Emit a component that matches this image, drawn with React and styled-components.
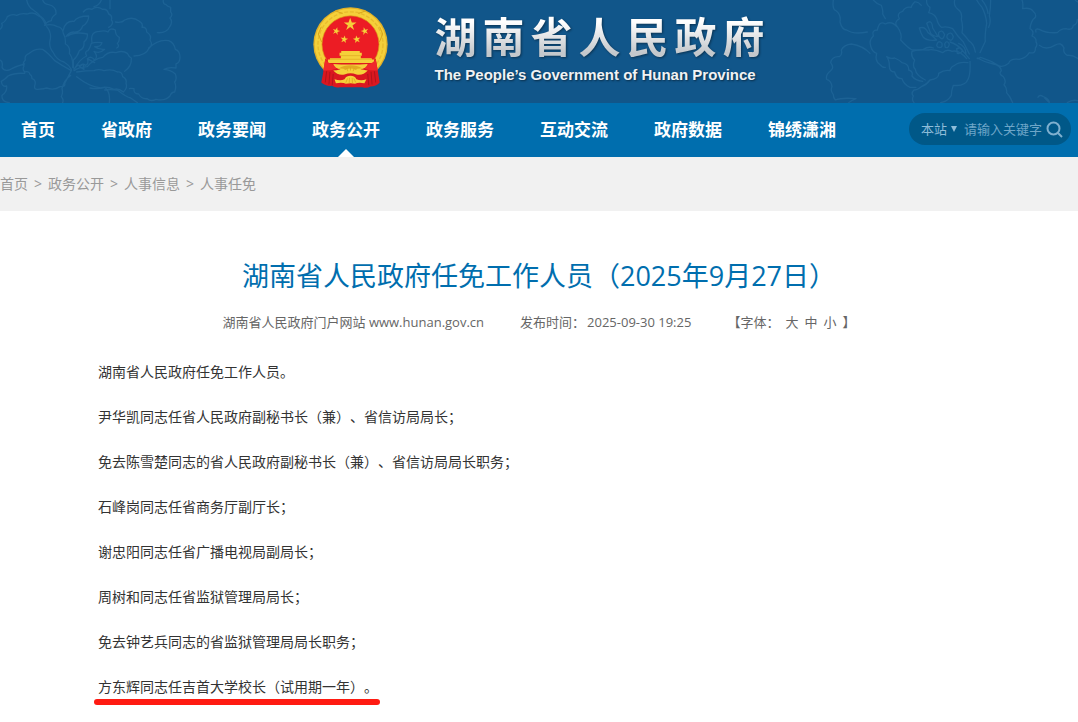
import { useState } from 'react';
import styled, { createGlobalStyle } from 'styled-components';

const colors = {
  banner: '#11568a',
  bannerLine: '#1c6295',
  nav: '#006eae',
  search: '#005888',
  searchText: '#8fbdd9',
  crumbs: '#f1f1f1',
  title: '#006eae',
  gold: '#f5d03a',
  red: '#ec1c24',
};

const GlobalStyle = createGlobalStyle`
  body {
    margin: 0;
    background: #fff;
    color: #333;
    font-family: 'Open Sans', 'Noto Sans CJK SC', sans-serif;
    font-size: 14px;
    text-spacing-trim: space-all;
  }

  a {
    color: inherit;
    text-decoration: none;
  }
`;

// Banner
const Banner = styled.header`
  position: relative;
  display: flex;
  justify-content: center;
  align-items: flex-start;
  gap: 46px;
  padding: 6px 0 15px;
  overflow: hidden;
  background: ${colors.banner};
`;

const Flowers = styled.svg`
  position: absolute;
  top: 0;
  ${props => (props.$side === 'left' ? 'left: 0;' : 'right: 0;')}
  fill: none;
  stroke: ${colors.bannerLine};
  stroke-width: 4;
  stroke-linecap: round;
  stroke-linejoin: round;
`;

const EmblemIcon = styled.svg`
  display: block;
  flex-shrink: 0;
`;

const SiteTitle = styled.div`
  position: relative;
  padding-top: 7px;
`;

const SiteName = styled.h1`
  margin: 0 -6px 8px 0;
  font-family: 'Noto Sans CJK SC', sans-serif;
  font-size: 42px;
  font-weight: 700;
  line-height: 44px;
  letter-spacing: 6px;
  white-space: nowrap;
  color: transparent;
  background: linear-gradient(#fff 20%, #c4c8cc 90%);
  background-clip: text;
  filter: drop-shadow(1px 1px 1px rgba(0, 0, 0, 0.4));
`;

const SiteNameEn = styled.p`
  margin: 0;
  font-family: 'Liberation Sans', sans-serif;
  font-size: 15px;
  font-weight: 700;
  line-height: 20px;
  white-space: nowrap;
  color: #f0f2f4;
  text-shadow: 1px 1px 2px rgba(0, 0, 0, 0.5);
`;

// Navigation
const NavBar = styled.nav`
  display: flex;
  justify-content: space-between;
  align-items: center;
  padding: 0 7px 0 21px;
  background: ${colors.nav};
`;

const NavList = styled.ul`
  display: flex;
  gap: 46px;
  margin: 0;
  padding: 0;
  list-style: none;
`;

const NavLink = styled.a`
  position: relative;
  display: block;
  color: #fff;
  font-size: 17px;
  font-weight: 700;
  line-height: 54px;
  white-space: nowrap;

  &[aria-current]::after {
    content: '';
    position: absolute;
    bottom: 0;
    left: 50%;
    margin-left: -8px;
    border: 8px solid transparent;
    border-top-width: 0;
    border-bottom-color: #fff;
  }
`;

const SearchForm = styled.form`
  display: flex;
  align-items: center;
  box-sizing: border-box;
  width: 162px;
  height: 32px;
  margin-bottom: 2px;
  padding: 0 8px 0 12px;
  border-radius: 16px;
  background: ${colors.search};
  color: ${colors.searchText};
`;

const ScopeField = styled.div`
  display: flex;
  align-items: center;
  gap: 3px;
  margin-right: 7px;
`;

const ScopeSelect = styled.select`
  appearance: none;
  width: 27px;
  padding: 0;
  border: 0;
  background: transparent;
  color: inherit;
  font: inherit;
  font-size: 13px;
`;

const SearchInput = styled.input`
  flex: 1;
  min-width: 0;
  padding: 0;
  border: 0;
  outline: 0;
  background: transparent;
  color: inherit;
  font: inherit;
  font-size: 13px;

  &::placeholder {
    color: #6ea6c8;
    opacity: 1;
  }
`;

const SearchButton = styled.button`
  display: flex;
  margin-left: 4px;
  padding: 0;
  border: 0;
  background: transparent;
  color: #7fb0cf;
  cursor: pointer;
`;

// Breadcrumbs
const Crumbs = styled.nav`
  display: flex;
  gap: 6px;
  background: ${colors.crumbs};
  color: #999;
  line-height: 54px;
`;

// Article
const Article = styled.article`
  padding: 45px 98px 0;
`;

const ArticleTitle = styled.h2`
  margin: 0;
  color: ${colors.title};
  font-size: 27px;
  font-weight: 400;
  line-height: 40px;
  text-align: center;
`;

const Meta = styled.div`
  display: flex;
  justify-content: center;
  gap: 36px;
  margin-top: 16px;
  color: #666;
  font-size: 13px;
  line-height: 20px;
  white-space: nowrap;
`;

const PublishTime = styled.time`
  margin-left: 2px;
`;

const FontSizes = styled.div`
  display: flex;
  gap: 6px;
`;

const FontSizeButton = styled.button`
  padding: 0;
  border: 0;
  background: transparent;
  color: inherit;
  font: inherit;
  cursor: pointer;
`;

const ArticleBody = styled.div`
  padding-top: 17px;
  font-size: ${props => props.$size}px;
  line-height: 45px;

  p {
    margin: 0;
  }
`;

const Marked = styled.span`
  position: relative;

  &::after {
    content: '';
    position: absolute;
    left: -4px;
    right: -2px;
    bottom: -9px;
    height: 6px;
    border-radius: 3px;
    background: #ff1b12;
  }
`;

const navItems = ['首页', '省政府', '政务要闻', '政务公开', '政务服务', '互动交流', '政府数据', '锦绣潇湘'];

const crumbs = ['首页', '政务公开', '人事信息', '人事任免'];

const fontSizes = [
  { label: '大', size: 18 },
  { label: '中', size: 16 },
  { label: '小', size: 14 },
];

const paragraphs = [
  { text: '湖南省人民政府任免工作人员。' },
  { text: '尹华凯同志任省人民政府副秘书长（兼）、省信访局局长；' },
  { text: '免去陈雪楚同志的省人民政府副秘书长（兼）、省信访局局长职务；' },
  { text: '石峰岗同志任省商务厅副厅长；' },
  { text: '谢忠阳同志任省广播电视局副局长；' },
  { text: '周树和同志任省监狱管理局局长；' },
  { text: '免去钟艺兵同志的省监狱管理局局长职务；' },
  { text: '方东辉同志任吉首大学校长（试用期一年）。', marked: true },
];

const LeftFlowers = () => (
  <Flowers $side="left" width="182" height="103" viewBox="0 0 546 309" aria-hidden="true">
    <path d="M0 88q10-8 5-18q12-4 17-20q14-10 28-4q14-8 32-4q20-8 34 6q16 4 22 24" />
    <path d="M80 0q4 20 20 30q26 18 36 44M128 0q4 12 18 14q24 6 22 28q-14 10-14 20q-16 4-20 14q22-6 38 4q16 2 18 20q8 14 6 32q16 8 12 28q12 14 10 42M140 80q16 18 10 42q-4 20 10 36q10 22 32 28q14 8 22 22" />
    <path d="M190 90q6-28 32-26q10-16 44-16q0 20-18 30q-6 20-28 18q-14 2-22 14M204 108q20-14 58-6q2 14-10 24q2 20-14 26q-6 18-18 28v24" />
    <path d="M250 36q10-14 26-8q14-12 32 0q14-2 18 14q12 4 8 18q8 8-2 18l-6 4M282 20q16-4 22-20M330 0v26" />
    <path d="M276 128q-6-34 22-34q16-4 26 2q6-14 22-6q0 16 12 22q0 14-6 18q8 10-2 14M346 66q20 4 28-6q24-12 44 4q12 6 8 18q14-2 14 14q16 10 10 24q10 16-4 26q-8 20-44 22M446 144q30-28 60-22q16 6 20 26q14 4 14 24q0 16-12 20v12q-22-4-36 4q22 2 34 14q6 14-2 24q6 14 0 30q-10 0-14 12q-14 16-42 10q-16 8-26-2q-18 2-26-14q-16 0-14-16q-14-2-14 0" />
    <path d="M222 212q14-10 40-12q20-24 46-28q18-20 40-14q20-8 34 2q4 10 12 14q2 24-20 40M230 216q28-4 52-4q14-6 30 0q24-6 40 4q14-2 16 14q14 8 10 20q6 12-8 26q-14-12-28-8q-22-10-40-4q-34-4-72-34" />
    <path d="M214 212q-26-14-50-30q-20-24-36-34q-22-4-40 12q-16 6-12 20q-10 10-4 18q-6 10 2 18q14-4 16 8q6 2 6 12q14 4 8 22q-2 12 10 10q20-2 26-4q22 8 40-4q18 0 14-10l20-38M0 180q10 4 6 22q4 12 22 8q16-10 46-18M28 308q-24-2-22-22q16-10 14-28q-14 4-16-14q14-8 20-16q20-10 50-8M212 226q-20 14-26 40q4 12-2 24q8 10 4 18M270 264q22 4 44-2q18 14 14 46M314 270q16-2 38 0q28 22 40 24l20 14" />
    <path d="M222 208q18-32 38-40q-8-14 4-16q6-8 10-22q10-4 32-2q-4 14-22 12q14 10 30 8q-14 14-32 6q14 16 2 26q-10-14-22-4q6 16-6 20q-8-8-16 2q-6-8-16 8M238 200l12-8l2 16zM262 176q10 6 22 12" />
    <path d="M490 0q-2 12 8 14q4 6 14 8v14q8 8-2 18q10 12-2 28q-8 18-36 16" />
  </Flowers>
);

const RightFlowers = () => (
  <Flowers $side="right" width="268" height="103" viewBox="0 0 804 309" aria-hidden="true">
    <path d="M70 0q-4 28 8 32q16 12 12 34q6 24 20 24q20 14 62 6M190 0q10 12 24 16q6 16 4 26l8 14" />
    <path d="M334 16q-10-12-20-10q-10 10-10 16q-18-4-26 12q-20 6-10 22q-18 12-6 24q16 24 10 40q20 22 34 30q22 0 34-2q16-10 30-4M260 80q-14-18-34-8q-18-12-24 18q-18 0-12 18q-14 14-8 30q4 18 18 22q-6 22 8 32q10 12 18 10" />
    <path d="M350 0q-2 14 10 22q0 10-4 16q18 4 24 18q4 18 14 26q18-4 34 4q12 20 32 40l18 36M434 0q-4 18 10 28q14 10 10 30q6 20 2 40q14 14 20 24q16 10 20 34M500 0q8 14 16 22q12 22 14 48q-6 36-4 54l-16 34M516 0q16 20 18 40M542 0q0 26-4 48q6 16-2 34" />
    <path d="M636 0q4 8 2 26q22-4 30 6q12 10 8 20q-14 10-16 34q14 8 6 22q14 6 12 18q6 8-2 18q2 18-18 14q-10 16-30 20q-28-4-32 12q-14 12-28 8q-24-16-56-26q-12 6-10 2q20 12 48 18q22 4 24 20q-10 10 6 18q10 14 2 24q10 10 8 24q10 10 18 30" />
    <path d="M180 160q-20-22-56-28q-22 2-30 18q4 14-6 20q-22-2-26 18q12 16 0 24q-16 12-12 26q14 4 16 22q-6 12 4 24q0 10 6 16q20-8 62-4q-14 6-22 12" />
    <path d="M470 176q-24-28-44-22q-16-8-28 4q-26-12-44-8q-30-2-48 4q-4 16 8 26q-8 20 2 28q2 18 30 32M474 188q-26-4-40 8q-12 4-14 16q-16-4-34 8q2 16-26 20q-10 14-26 20q-12 10-22 10q-10 10-2 18q-6 12 2 20M480 184q2 40-6 54q-8 22-44 18q-6 16-6 30q-10 18-32 22M230 170q8 10 8 28q0 18 16 18q4 20 22 20q6 18 24 26h18M230 170q12 8 24 4q14 6 22 14q22 4 20 22q14 4 10 18q10 14 32 16" />
    <path d="M328 84q18-6 26 14q12 8 26 22q-28 4-40-8q-8-12-12-28M350 70q16-14 18 14q8 12 16 26q-16-2-22-10zM386 98q10-12 18 6q-4 14-10 12q-10-6-8-18M412 104q12-12 18 6q-4 16-14 8q-8-4-4-14M380 136q4-18 16-6q2 10-4 12q-10 2-12-6M404 132q6-14 14 0q-2 14-12 10zM440 146q14-6 18 6q-8 12-16 8zM420 126q24 8 36 24l22 26M446 130q20 8 22 30" />
    <path d="M678 96q-4-12 10-8q20 12 54 10q10-12 26-12q20 6 22-10q12-2 12-18M796 0q2 4 8 6M688 136q20 16 46 0q20-12 28 8q-4 14 10 22q14-2 32 10M684 292q4-10 16-2q14 4 18 16M704 294l14 14M772 308q14-10 32-6" />
  </Flowers>
);

const STAR = 'M0-20L5-6L19-6L7 3L12 17L0 8L-12 17L-7 3L-19-6L-5-6Z';

const Emblem = () => (
  <EmblemIcon width="75" height="82" viewBox="45 18 226 246" role="img" aria-label="国徽">
    <circle cx="158" cy="133" r="112" fill="#e0b02a" />
    <circle cx="158" cy="133" r="108" fill={colors.gold} />
    <circle cx="158" cy="133" r="98" fill="none" stroke="#e8bb2c" strokeWidth="4" strokeDasharray="12 5" />
    <circle cx="158" cy="133" r="86" fill={colors.red} stroke="#d99f17" strokeWidth="2" />
    <path d="M70 80l-9 22M61 102l10 24M246 80l9 22M255 102l-10 24M112 32l22 8M204 32l-22 8" stroke="#d9a51b" strokeWidth="3" fill="none" />
    <g fill={colors.gold}>
      <path d={STAR} transform="translate(157 73)" />
      <path d={STAR} transform="translate(115 93) rotate(15) scale(.6)" />
      <path d={STAR} transform="translate(201 93) rotate(-15) scale(.6)" />
      <path d={STAR} transform="translate(139 118) rotate(10) scale(.6)" />
      <path d={STAR} transform="translate(177 118) rotate(-10) scale(.6)" />
    </g>
    <path d="M82 176q-6 44-12 72q14 12 32 10q12 8 24 4h68q14 4 24-2q18 0 28-12l-12-72l-20 14H100z" fill="#da1720" />
    <path d="M130 153h56v5h6v9h-3v8h33v4h7v10H90v-10h6v-4h33v-8h-4v-9h5z" fill={colors.gold} />
    <path d="M126 167h64M96 178h124" stroke="#dfa920" strokeWidth="2" />
    <path d="M82 178q14 20 46 16q-10 20-52 18M234 178q-14 20-46 16q10 20 52 18" fill="#f02a2b" />
    <path d="M106 192q22 2 52 2t52-2q-6 14-22 16q22 4 22 4q-14 16-34 12q-18-8-36 0q-20 4-34-12q10 0 22-4q-16-2-22-16z" fill={colors.gold} />
    <path d="M122 206q16-10 36-10t36 10q-16-2-20 4q-16-8-32 0q-4-6-20-4z" fill="#e3a922" />
    <path d="M110 238q18 6 30 0q6-10 18-10t18 10q14 6 30 0l-6 12q-20-4-28 2q-14-4-28 0q-10-6-30-2z" fill={colors.gold} />
    <path d="M144 248l5-12M154 250l1-16M164 250l-1-16M174 248l-6-12M150 214l-3-9M158 212v-10M166 214l3-9" stroke="#d99f17" strokeWidth="2" />
    <path d="M86 214l-4 34M96 216l-3 38M106 222l-3 34M230 214l4 34M220 216l3 38M210 222l3 34" stroke="#b0131b" strokeWidth="3" />
  </EmblemIcon>
);

const App = () => {
  const [bodySize, setBodySize] = useState(14);

  return (
    <>
      <GlobalStyle />
      <Banner>
        <LeftFlowers />
        <RightFlowers />
        <Emblem />
        <SiteTitle>
          <SiteName>湖南省人民政府</SiteName>
          <SiteNameEn lang="en">The People’s Government of Hunan Province</SiteNameEn>
        </SiteTitle>
      </Banner>

      <NavBar>
        <NavList>
          {navItems.map(item => (
            <li key={item}>
              <NavLink href="#" aria-current={item === '政务公开' ? 'page' : undefined}>
                {item}
              </NavLink>
            </li>
          ))}
        </NavList>
        <SearchForm role="search" onSubmit={e => e.preventDefault()}>
          <ScopeField>
            <ScopeSelect aria-label="搜索范围">
              <option>本站</option>
            </ScopeSelect>
            <svg width="6" height="6" viewBox="0 0 6 6" aria-hidden="true">
              <path d="M0 0h6L3 6z" fill="currentColor" />
            </svg>
          </ScopeField>
          <SearchInput type="text" aria-label="关键字" placeholder="请输入关键字" />
          <SearchButton type="submit" aria-label="搜索">
            <svg width="17" height="17" viewBox="0 0 17 17" fill="none" stroke="currentColor" strokeWidth="2">
              <circle cx="7.5" cy="7.5" r="6" />
              <path d="M12 12l4 4" />
            </svg>
          </SearchButton>
        </SearchForm>
      </NavBar>

      <Crumbs aria-label="当前位置">
        {crumbs.map((crumb, index) => [
          index > 0 && <span key={`sep-${crumb}`}>&gt;</span>,
          <a key={crumb} href="#">{crumb}</a>,
        ])}
      </Crumbs>

      <Article>
        <ArticleTitle>湖南省人民政府任免工作人员（2025年9月27日）</ArticleTitle>
        <Meta>
          <span>湖南省人民政府门户网站 www.hunan.gov.cn</span>
          <span>
            发布时间：
            <PublishTime dateTime="2025-09-30T19:25">2025-09-30 19:25</PublishTime>
          </span>
          <FontSizes>
            <span>【字体：</span>
            {fontSizes.map(({ label, size }) => (
              <FontSizeButton key={label} type="button" onClick={() => setBodySize(size)}>
                {label}
              </FontSizeButton>
            ))}
            <span>】</span>
          </FontSizes>
        </Meta>
        <ArticleBody $size={bodySize}>
          {paragraphs.map(({ text, marked }) => (
            <p key={text}>{marked ? <Marked>{text}</Marked> : text}</p>
          ))}
        </ArticleBody>
      </Article>
    </>
  );
};

export default App;
